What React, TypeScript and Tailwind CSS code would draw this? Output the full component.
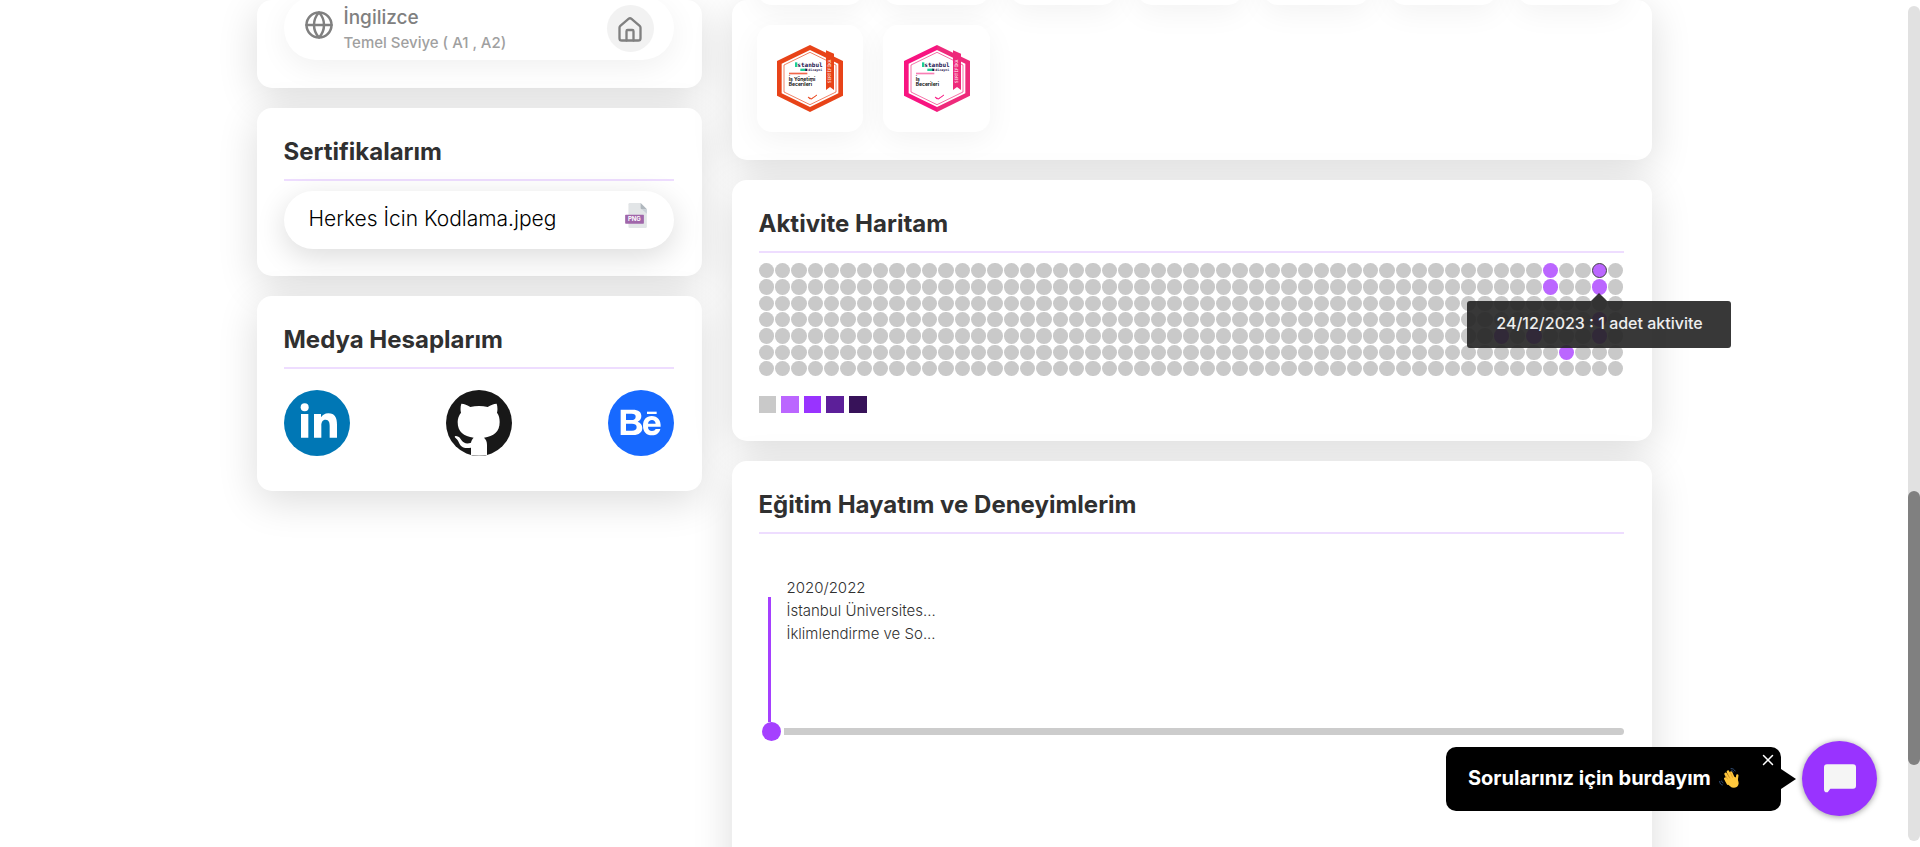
import React from "react";
import { Globe, Home, X } from "lucide-react";

const card = "rounded-[15px] bg-white pr-7 pl-[27px] shadow-[0_10px_40px_rgba(0,0,0,0.14)]";

function CardTitle({ children }: { children: React.ReactNode }) {
  return (
    <h2 className="border-b-2 border-[#eeddff] pt-7 pb-[11px] text-[24px] leading-8 font-bold text-[#303030]">
      {children}
    </h2>
  );
}

function Badge({ left, right, lines, tint }: { left: string; right: string; lines: string[]; tint: string }) {
  return (
    <svg viewBox="0 0 198 201" className="h-[67px] w-[66px]" role="img" aria-label={lines.join(" ")}>
      <path d="M99 0 0 48v104l99 49z" fill={left} />
      <path d="M99 0l99 48v104l-99 49z" fill={right} />
      <path d="M99 15 14 56v89l85 41 85-41V56z" fill="#fff" />
      <path d="M99 22 21 60v81l78 38 78-38V60z" fill="none" stroke={right} strokeWidth="2" />
      <path d="M147 16l24 10v109l-12-9-12 9z" fill={right} />
      <g fontFamily="'DejaVu Sans Mono', monospace" fontWeight="700" fill="#241450">
        <text x="61" y="66" fontSize="18">stanbul</text>
        <text x="94" y="78" fontSize="10">dizayni</text>
      </g>
      <rect x="54" y="52" width="7" height="14" fill="#1ccf96" />
      <rect x="70" y="71" width="17" height="7" fill="#1ccf96" />
      <rect x="85" y="71" width="6" height="7" fill="#241450" />
      <rect x="36" y="83" width="55" height="5" fill={tint} />
      <g fontFamily="Inter, sans-serif" fontWeight="700" fontSize="15" fill="#151515">
        {lines.map((line, i) => (
          <text key={line} x="35" y={107 + i * 17}>{line}</text>
        ))}
      </g>
      <text x="-114" y="163" transform="rotate(-90)" fontFamily="'DejaVu Sans Mono', monospace" fontSize="13" fill="#fff">
        SERTİFİKA
      </text>
      <path d="M93 156l10 5 17-11-16 12-7-1z" fill={left} stroke={left} strokeWidth="2" />
    </svg>
  );
}

const ACTIVE = new Set(["48-0", "48-1", "51-0", "51-1", "51-3", "51-4", "45-4", "47-4", "49-5"]);

function Heatmap() {
  return (
    <div className="mt-[10px] grid grid-cols-[repeat(53,minmax(0,1fr))] gap-px">
      {Array.from({ length: 7 * 53 }, (_, i) => {
        const col = i % 53;
        const row = Math.floor(i / 53);
        const key = `${col}-${row}`;
        const hovered = key === "51-0";
        return (
          <div key={key} className={hovered ? "relative z-10 aspect-square" : "aspect-square"}>
            <div
              className={
                ACTIVE.has(key)
                  ? hovered
                    ? "h-full rounded-full border border-[#444444] bg-[#bb66ff]"
                    : "h-full rounded-full bg-[#bb66ff]"
                  : "h-full rounded-full bg-[#c9c9c9]"
              }
            />
            {hovered && (
              <div
                role="tooltip"
                className="absolute top-[38px] left-1/2 flex h-[47px] w-[264px] -translate-x-1/2 items-center justify-center rounded-[3px] bg-[#222222]/90 pb-[3px] text-[16px] font-medium text-[#eeeeee]"
              >
                <span className="absolute bottom-full left-1/2 -translate-x-1/2 border-x-8 border-b-8 border-x-transparent border-b-[#222222]/90" />
                24/12/2023 : 1 adet aktivite
              </div>
            )}
          </div>
        );
      })}
    </div>
  );
}

function Legend() {
  return (
    <div className="mt-5 grid w-[108px] grid-cols-5 gap-[5px]">
      <span className="h-[17px] bg-[#c9c9c9]" />
      <span className="h-[17px] bg-[#bb66ff]" />
      <span className="h-[17px] bg-[#9933ff]" />
      <span className="h-[17px] bg-[#5c1f99]" />
      <span className="h-[17px] bg-[#371259]" />
    </div>
  );
}

function PngFile() {
  return (
    <svg viewBox="0 0 66 76" className="h-[25px] w-[22px]" aria-hidden="true">
      <path d="M14 0h33l19 19v53a4 4 0 0 1-4 4H14a4 4 0 0 1-4-4V4a4 4 0 0 1 4-4z" fill="#e2e5e7" />
      <path d="M47 0l19 19H51a4 4 0 0 1-4-4z" fill="#b0b7bd" />
      <path d="M51 19h15v14z" fill="#cad1d8" />
      <rect y="36" width="57" height="27" rx="2" fill="#a066aa" />
      <text x="28" y="56" textAnchor="middle" fontFamily="Inter, sans-serif" fontWeight="700" fontSize="18" fill="#fff">PNG</text>
    </svg>
  );
}

function LinkedInLogo() {
  return (
    <svg viewBox="0 0 198 198" className="size-[66px]" aria-hidden="true">
      <circle cx="99" cy="99" r="99" fill="#0077b5" />
      <circle cx="62" cy="52" r="12" fill="#fff" />
      <path d="M51 72h22v71H51zM90 72h21v10c4-7 12-12 22-12 20 0 26 14 26 34v39h-22v-35c0-10-2-19-12-19s-13 8-13 18v36H90z" fill="#fff" />
    </svg>
  );
}

function GitHubLogo() {
  return (
    <svg viewBox="0 0 198 198" className="size-[66px]" aria-hidden="true">
      <circle cx="99" cy="99" r="99" fill="#181818" />
      <path
        d="M75 195v-22c-22 5-32-5-36-15-3-7-5-10-11-15-3-2-2-5 2-5 8 0 13 7 16 12 7 11 18 12 29 8 1-6 4-11 8-15-30-4-48-17-48-47 0-11 4-21 10-28-2-7-2-18 1-27 9 0 18 4 27 10 16-4 36-4 52 0 9-6 18-10 27-10 3 9 3 20 1 27 6 7 8 17 8 28 0 30-18 43-47 47 6 5 9 12 9 22v30q-24 4-48 0z"
        fill="#fff"
      />
    </svg>
  );
}

function BehanceLogo() {
  return (
    <svg viewBox="0 0 198 198" className="size-[66px]" aria-hidden="true">
      <circle cx="99" cy="99" r="99" fill="#1769ff" />
      <path
        fillRule="evenodd"
        d="M38 59h36c18 0 26 7 26 19 0 9-4 14-11 17 9 3 14 10 14 19 0 13-10 21-27 21H38zM54 71v19h16c8 0 13-3 13-10s-4-9-12-9zM54 101v21h18c9 0 14-3 14-11s-6-10-14-10z"
        fill="#fff"
      />
      <path d="M117 65h29v7h-29z" fill="#fff" />
      <path
        fillRule="evenodd"
        d="M131 78c18 0 28 13 27 32h-38c0 9 5 13 12 13 6 0 9-3 11-6h14c-3 12-12 19-25 19-17 0-27-11-27-29s10-29 26-29zM120 101h23c-1-7-5-11-11-11s-11 4-12 11z"
        fill="#fff"
      />
    </svg>
  );
}

function LeftColumn() {
  return (
    <div className="flex flex-col gap-5">
      <section className={`${card} pb-7`}>
        <div className="-mt-1 flex h-16 items-center rounded-[32px] bg-white px-5 text-[#808080] shadow-[0_8px_30px_rgba(0,0,0,0.06)]">
          <Globe className="mb-[6px] size-[30px]" strokeWidth={2} />
          <div className="ml-[10px] flex-1 pt-[3px]">
            <p className="text-[19px] leading-[25px] font-medium">İngilizce</p>
            <p className="text-[15px] leading-[25px] font-medium text-[#a0a0a0]">Temel Seviye ( A1 , A2)</p>
          </div>
          <span className="flex size-[47px] items-center justify-center rounded-full bg-[#f2f2f2] pt-[3px] pr-px">
            <Home className="size-7" strokeWidth={2} />
          </span>
        </div>
      </section>

      <section className={`${card} pb-[27px]`}>
        <CardTitle>Sertifikalarım</CardTitle>
        <a
          href="#sertifika"
          className="mt-[10px] flex h-[58px] items-center justify-between rounded-full bg-white pr-[27px] pb-[3px] pl-[25px] text-[21px] text-black shadow-[0_8px_30px_rgba(0,0,0,0.14)]"
        >
          <span className="font-light">Herkes İcin Kodlama.jpeg</span>
          <span className="mb-[6px]"><PngFile /></span>
        </a>
      </section>

      <section className={`${card} pb-[35px]`}>
        <CardTitle>Medya Hesaplarım</CardTitle>
        <div className="mt-[21px] flex justify-between">
          <a href="#linkedin" aria-label="LinkedIn"><LinkedInLogo /></a>
          <a href="#github" aria-label="GitHub"><GitHubLogo /></a>
          <a href="#behance" aria-label="Behance"><BehanceLogo /></a>
        </div>
      </section>
    </div>
  );
}

const tile = "flex h-[107px] items-center justify-center rounded-[15px] bg-white shadow-[0_8px_30px_rgba(0,0,0,0.05)]";

function RightColumn() {
  return (
    <div className="flex flex-col gap-5">
      <section className="rounded-[15px] bg-white pr-7 pb-7 pl-[25px] shadow-[0_10px_40px_rgba(0,0,0,0.14)]">
        <div className="-mt-[102px] grid grid-cols-7 gap-5">
          {Array.from({ length: 7 }, (_, i) => (
            <div key={i} className={tile} />
          ))}
          <div className={tile}>
            <Badge left="#e84318" right="#e84318" tint="#f0674a" lines={["İş Yönetimi", "Becerileri"]} />
          </div>
          <div className={tile}>
            <Badge left="#f81481" right="#ee2a7b" tint="#f87fb5" lines={["İş", "Becerileri"]} />
          </div>
        </div>
      </section>

      <section className={`${card} pb-7`}>
        <CardTitle>Aktivite Haritam</CardTitle>
        <Heatmap />
        <Legend />
      </section>

      <section className={`${card} pb-40`}>
        <CardTitle>Eğitim Hayatım ve Deneyimlerim</CardTitle>
        <div className="mt-[42px] ml-[3px] flex">
          <div className="mt-[21px] flex w-[19px] flex-col">
            <span className="ml-[6px] h-[125px] w-[3px] bg-[#a540ff]" />
            <span className="size-[19px] rounded-full bg-[#a540ff]" />
          </div>
          <div className="ml-[3px] flex flex-1 flex-col justify-between pb-[6px]">
            <div className="ml-[3px] text-[15px] leading-[23px] font-light text-[#303030]">
              <p>2020/2022</p>
              <p>İstanbul Üniversites...</p>
              <p>İklimlendirme ve So...</p>
            </div>
            <div className="h-[7px] rounded-r-full bg-[#cccccc]" />
          </div>
        </div>
      </section>
    </div>
  );
}

function ChatWidget() {
  return (
    <div className="fixed right-[43px] bottom-[31px] flex items-center">
      <div className="relative flex h-16 w-[335px] items-center rounded-[10px] bg-black pb-[2px] pl-[22px] text-[20px] font-bold text-white">
        Sorularınız için burdayım
        <svg viewBox="0 0 60 60" className="ml-2 size-5" aria-hidden="true">
          <g fill="none" strokeLinecap="round">
            <path d="M27 47 19 32M32 40 20 18M38 36 27 11M45 34 36 14" stroke="#ffc83d" strokeWidth="8" />
            <path d="M52 43 55 22" stroke="#ffc83d" strokeWidth="7" />
          </g>
          <path d="M19 38 46 26l8 4c6 12 7 21-1 27-11 6-22 0-34-19z" fill="#ffc83d" />
          <path d="M26 34l-6-11M33 31l-8-15M41 29l-7-16" stroke="#d68c20" strokeWidth="2" />
          <path d="M35 2c7-1 11 3 14 8M37 8c4 0 6 2 7 5M2 39c0 8 4 11 9 12M8 38c0 4 2 6 5 7" fill="none" stroke="#32507c" strokeWidth="3" />
        </svg>
        <button type="button" aria-label="Kapat" className="absolute top-1 right-1">
          <X className="size-[18px]" strokeWidth={2} />
        </button>
      </div>
      <span className="border-y-[10px] border-l-[15px] border-y-transparent border-l-black" />
      <button
        type="button"
        aria-label="Sohbet"
        className="ml-[6px] flex size-[75px] items-center justify-center rounded-full bg-[#9933ff] shadow-[0_1px_6px_rgba(0,0,0,0.4)]"
      >
        <svg viewBox="0 0 96 86" className="h-[29px] w-8" aria-hidden="true">
          <path d="M9 0h78a9 9 0 0 1 9 9v56a9 9 0 0 1-9 9H19L11 84Q0 86 0 75V9a9 9 0 0 1 9-9z" fill="#f5f5f5" />
        </svg>
      </button>
    </div>
  );
}

export default function App() {
  return (
    <div className="flex h-screen overflow-hidden bg-white font-['Inter',sans-serif]">
      <main className="flow-root min-w-0 flex-1">
        <div className="mx-auto grid max-w-[1395px] grid-cols-[445fr_920fr] gap-[30px]">
          <LeftColumn />
          <RightColumn />
        </div>
      </main>
      <div className="flex w-3 flex-col py-[6px]">
        <div className="flex flex-1 flex-col rounded-full bg-[#e1e1e1]">
          <div className="flex-[485]" />
          <div className="flex-[274] rounded-full bg-[#808080]" />
          <div className="flex-[76]" />
        </div>
      </div>
      <ChatWidget />
    </div>
  );
}
